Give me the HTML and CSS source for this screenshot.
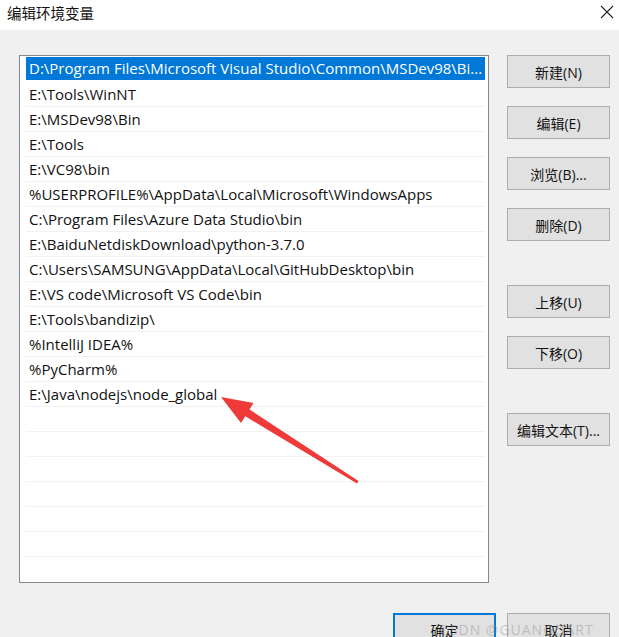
FILE: index.html
```html
<!DOCTYPE html>
<html lang="zh-CN">
<head>
<meta charset="utf-8">
<title>编辑环境变量</title>
<link rel="stylesheet" href="styles.css">
</head>
<body>
<div class="dialog">
  <div class="titlebar">
    <span class="title">编辑环境变量</span>
    <span class="close">
      <svg width="14" height="14" viewBox="0 0 14 14"><path d="M1 1 L13 13 M13 1 L1 13" stroke="#222" stroke-width="1.1" fill="none"/></svg>
    </span>
  </div>
  <div class="content">
    <div class="main">
      <div class="listbox">
        <div class="row selected">D:\Program Files\Microsoft Visual Studio\Common\MSDev98\Bi...</div>
        <div class="row">E:\Tools\WinNT</div>
        <div class="row">E:\MSDev98\Bin</div>
        <div class="row">E:\Tools</div>
        <div class="row">E:\VC98\bin</div>
        <div class="row">%USERPROFILE%\AppData\Local\Microsoft\WindowsApps</div>
        <div class="row">C:\Program Files\Azure Data Studio\bin</div>
        <div class="row">E:\BaiduNetdiskDownload\python-3.7.0</div>
        <div class="row">C:\Users\SAMSUNG\AppData\Local\GitHubDesktop\bin</div>
        <div class="row">E:\VS code\Microsoft VS Code\bin</div>
        <div class="row">E:\Tools\bandizip\</div>
        <div class="row">%IntelliJ IDEA%</div>
        <div class="row">%PyCharm%</div>
        <div class="row">E:\Java\nodejs\node_global</div>
        <div class="row"></div>
        <div class="row"></div>
        <div class="row"></div>
        <div class="row"></div>
        <div class="row"></div>
        <div class="row"></div>
        <div class="row last"></div>
      </div>
      <div class="side">
        <button class="btn">新建(N)</button>
        <button class="btn">编辑(E)</button>
        <button class="btn">浏览(B)...</button>
        <button class="btn">删除(D)</button>
        <button class="btn spaced">上移(U)</button>
        <button class="btn">下移(O)</button>
        <button class="btn spaced">编辑文本(T)...</button>
      </div>
    </div>
    <div class="footer">
      <button class="btn default">确定</button>
      <button class="btn">取消</button>
    </div>
  </div>
  <div class="watermark">CSDN @GUANGDART</div>
  <svg class="arrow" width="619" height="637" viewBox="0 0 619 637">
    <polygon points="221,397 253.5,403 249.5,409.5 358.5,481 357,483.5 245.3,416.3 241,423" fill="#f03a3a"/>
  </svg>
</div>
</body>
</html>
```
FILE: styles.css
```css
html, body {
  margin: 0;
  padding: 0;
}
body {
  width: 619px;
  height: 637px;
  overflow: hidden;
  background: #f0f0f0;
  font-family: "Open Sans", "Noto Sans CJK SC", sans-serif;
  color: #000;
}
.dialog {
  position: relative;
  width: 619px;
  height: 637px;
  overflow: hidden;
}
.titlebar {
  height: 30px;
  background: #fff;
  display: flex;
  align-items: center;
  justify-content: space-between;
  padding: 0 4px 6px 7px;
  box-sizing: border-box;
}
.title {
  font-family: "Noto Sans CJK SC", sans-serif;
  font-size: 14.5px;
  color: #111;
}
.close {
  display: flex;
  width: 16px;
  height: 16px;
  align-items: center;
  justify-content: center;
}
.content {
  padding: 25px 9px 0 19px;
}
.main {
  display: flex;
  gap: 18px;
}
.listbox {
  width: 470px;
  height: 528px;
  box-sizing: border-box;
  background: #fff;
  border: 1px solid #828790;
  padding: 1px 3px 0 6px;
  overflow: hidden;
}
.row {
  height: 25px;
  box-sizing: border-box;
  border-bottom: 1px solid #f2f2f2;
  padding-left: 3px;
  font-size: 15px;
  line-height: 24px;
  white-space: nowrap;
  overflow: hidden;
  color: #111;
}
.row.selected {
  background: #0078d7;
  color: #fff;
  border-bottom: 2px solid #fff;
  line-height: 23px;
}
.row.last {
  border-bottom: none;
}
.side {
  display: flex;
  flex-direction: column;
  gap: 18px;
}
.btn {
  width: 103px;
  height: 33px;
  box-sizing: border-box;
  background: #e1e1e1;
  border: 1px solid #adadad;
  font-family: "Open Sans", "Noto Sans CJK SC", sans-serif;
  font-size: 14px;
  color: #111;
  padding: 0;
  margin: 0;
}
.btn.spaced {
  margin-top: 26px;
}
.footer {
  display: flex;
  justify-content: flex-end;
  gap: 11px;
  margin-top: 30px;
}
.btn.default {
  border: 2px solid #0078d7;
}
.watermark {
  position: absolute;
  left: 440px;
  top: 620px;
  font-family: "Open Sans", sans-serif;
  font-size: 14px;
  color: rgba(140, 140, 140, 0.45);
  letter-spacing: 1px;
}
.arrow {
  position: absolute;
  left: 0;
  top: 0;
  pointer-events: none;
}
```
